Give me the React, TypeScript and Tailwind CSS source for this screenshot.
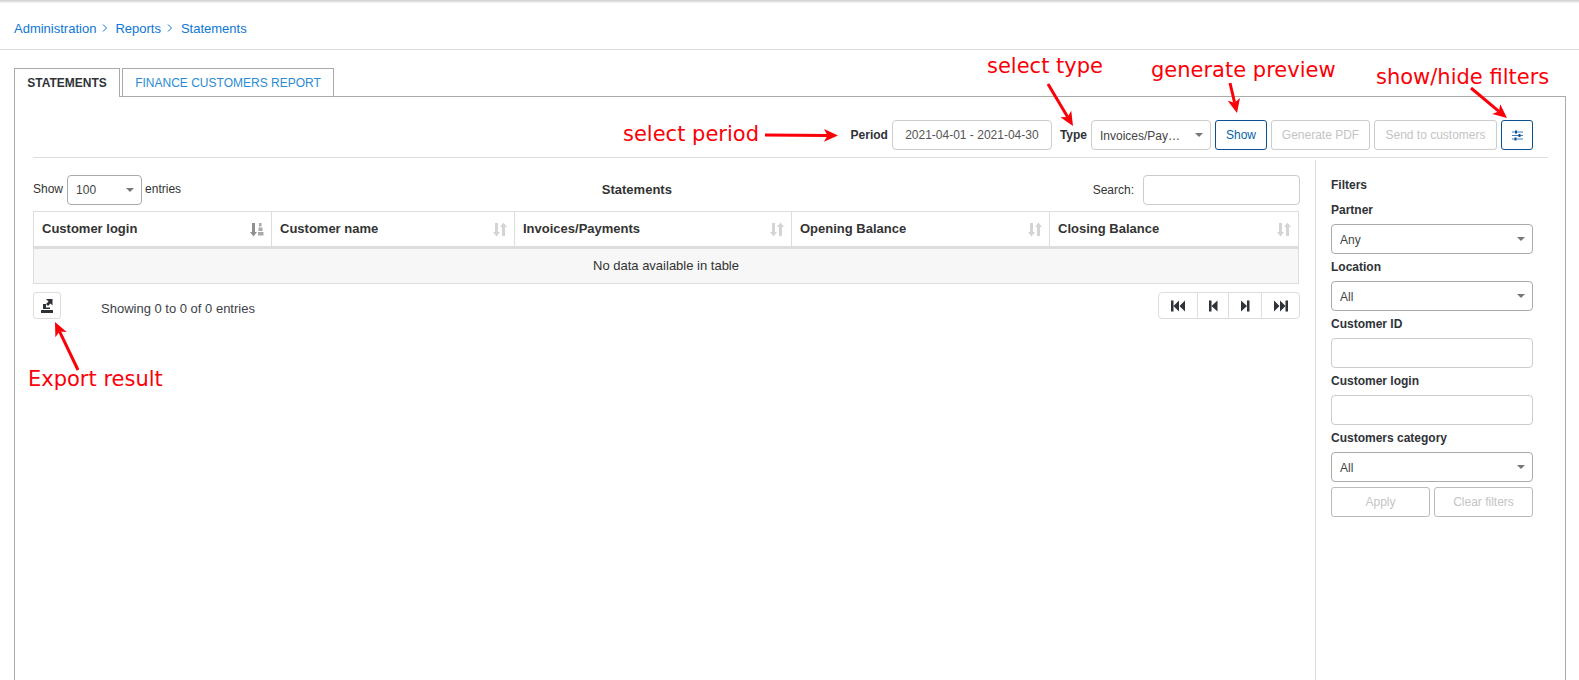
const COLUMNS = [
  { label: "Customer login", width: "w-[238px]", sorted: true },
  { label: "Customer name", width: "w-[243px]", sorted: false },
  { label: "Invoices/Payments", width: "w-[277px]", sorted: false },
  { label: "Opening Balance", width: "w-[258px]", sorted: false },
  { label: "Closing Balance", width: "", sorted: false },
];

const inputClass = "h-[30px] rounded-[4px] border border-[#ccc] bg-white";
const labelClass = "text-[12px] font-bold text-[#2f3338]";

function Caret({ className = "" }: { className?: string }) {
  return (
    <span
      className={`h-0 w-0 border-x-[4px] border-t-[4px] border-x-transparent border-t-[#777] ${className}`}
    />
  );
}

function SelectBox({
  value,
  className = "",
  dark = true,
}: {
  value: string;
  className?: string;
  dark?: boolean;
}) {
  return (
    <div
      className={`flex h-[30px] items-center justify-between rounded-[4px] border bg-white pl-[8px] pr-[7px] text-[12px] text-[#444] ${
        dark ? "border-[#aaa]" : "border-[#ccc]"
      } ${className}`}
    >
      <span className="pt-[1px]">{value}</span>
      <Caret />
    </div>
  );
}

function SortIcon({ sorted }: { sorted: boolean }) {
  if (sorted) {
    return (
      <svg width="14" height="15" viewBox="0 0 14 15" className="shrink-0">
        <path d="M2 1h3v9h2l-3.500 4.500L0 10h2z" fill="#8f8f8f" />
        <path d="M9 1h2.500v3.500H9zM8.500 5.500h4v3.500h-4zM8 10h5.500v3.500H8z" fill="#a9a9a9" />
      </svg>
    );
  }
  return (
    <svg width="14" height="15" viewBox="0 0 14 15" className="shrink-0">
      <path d="M2 1h3v9h2l-3.500 4.500L0 10h2z" fill="#d4d4d4" />
      <path d="M9 14h3V5h2L10.500.5 7 5h2z" fill="#d4d4d4" />
    </svg>
  );
}

function PageIcon({ kind }: { kind: "first" | "prev" | "next" | "last" }) {
  const paths = {
    first: "M0 .5h2.500v11H0zM8 .5v11L2.500 6zM14 .5v11L8.500 6z",
    prev: "M3 .5h2.500v11H3zM11.500 .5v11L5.500 6z",
    next: "M3 .5v11L9 6zM9 .5h2.500v11H9z",
    last: "M0 .5v11L5.500 6zM6 .5v11L11.500 6zM11.500 .5H14v11h-2.500z",
  };
  return (
    <svg width="14" height="12" viewBox="0 0 14 12">
      <path d={paths[kind]} fill="#2f3338" />
    </svg>
  );
}

function Arrow({
  from,
  to,
  size = 14,
}: {
  from: [number, number];
  to: [number, number];
  size?: number;
}) {
  const dx = to[0] - from[0];
  const dy = to[1] - from[1];
  const len = Math.hypot(dx, dy);
  const ux = dx / len;
  const uy = dy / len;
  const bx = to[0] - ux * size;
  const by = to[1] - uy * size;
  const nx = -uy * (size * 0.45);
  const ny = ux * (size * 0.45);
  const notchX = to[0] - ux * size * 0.75;
  const notchY = to[1] - uy * size * 0.75;
  return (
    <g>
      <line x1={from[0]} y1={from[1]} x2={notchX} y2={notchY} stroke="#fb0007" strokeWidth="3" />
      <polygon
        points={`${to[0]},${to[1]} ${bx + nx},${by + ny} ${notchX},${notchY} ${bx - nx},${by - ny}`}
        fill="#fb0007"
      />
    </g>
  );
}

function Note({ text, className }: { text: string; className: string }) {
  return (
    <span
      className={`absolute whitespace-nowrap font-['DejaVu_Sans',sans-serif] text-[21px] leading-[26px] text-[#fb0007] ${className}`}
    >
      {text}
    </span>
  );
}

function Annotations() {
  return (
    <>
      <svg className="pointer-events-none absolute inset-0" width="1579" height="680">
        <Arrow from={[765, 135]} to={[838, 135.500]} />
        <Arrow from={[1048, 84]} to={[1073, 126]} />
        <Arrow from={[1230, 83]} to={[1237, 113]} />
        <Arrow from={[1471, 88]} to={[1507, 118]} />
        <Arrow from={[78, 370]} to={[55, 322]} />
      </svg>
      <Note text="select period" className="left-[623px] top-[121px]" />
      <Note text="select type" className="left-[987px] top-[53px]" />
      <Note text="generate preview" className="left-[1151px] top-[57px]" />
      <Note text="show/hide filters" className="left-[1376px] top-[64px]" />
      <Note text="Export result" className="left-[28px] top-[366px]" />
    </>
  );
}

function FilterField({
  label,
  children,
  className = "",
}: {
  label: string;
  children: React.ReactNode;
  className?: string;
}) {
  return (
    <div className={`flex flex-col ${className}`}>
      <div className={`${labelClass} mb-[7px] leading-[14px]`}>{label}</div>
      {children}
    </div>
  );
}

function FiltersPanel() {
  return (
    <aside className="mt-[2px] flex w-[233px] shrink-0 flex-col border-l border-[#ddd] pl-[15px] pr-[15px]">
      <div className={`${labelClass} mt-[18px] mb-[11px] leading-[14px]`}>Filters</div>
      <FilterField label="Partner" className="mb-[6px]">
        <SelectBox value="Any" />
      </FilterField>
      <FilterField label="Location" className="mb-[6px]">
        <SelectBox value="All" />
      </FilterField>
      <FilterField label="Customer ID" className="mb-[6px]">
        <div className={inputClass} />
      </FilterField>
      <FilterField label="Customer login" className="mb-[6px]">
        <div className={inputClass} />
      </FilterField>
      <FilterField label="Customers category">
        <SelectBox value="All" />
      </FilterField>
      <div className="mt-[5px] flex gap-[4px]">
        <button className="h-[30px] flex-1 rounded-[3px] border border-[#bbb] text-[12px] text-[#c4c4c4]">
          Apply
        </button>
        <button className="h-[30px] flex-1 rounded-[3px] border border-[#bbb] text-[12px] text-[#c4c4c4]">
          Clear filters
        </button>
      </div>
    </aside>
  );
}

function StatementsTable() {
  return (
    <table className="mt-[7px] w-[calc(100%-1px)] table-fixed border-collapse text-[13px] text-[#333]">
      <thead>
        <tr className="h-[36px]">
          {COLUMNS.map((col) => (
            <th
              key={col.label}
              className={`${col.width} border border-b-[3px] border-[#ddd] border-b-[#ddd] pl-[8px] pr-[7px] text-left font-bold`}
            >
              <div className="flex items-center justify-between">
                <span>{col.label}</span>
                <SortIcon sorted={col.sorted} />
              </div>
            </th>
          ))}
        </tr>
      </thead>
      <tbody>
        <tr className="h-[36px] bg-[#f7f7f7]">
          <td colSpan={5} className="border border-[#ddd] text-center">
            No data available in table
          </td>
        </tr>
      </tbody>
    </table>
  );
}

function TableFooter() {
  return (
    <div className="mt-[8px] flex items-start justify-between">
      <div className="flex items-start">
        <button className="flex h-[27px] w-[28px] items-center justify-center rounded-[3px] border border-[#ddd]">
          <svg width="14" height="16" viewBox="0 0 14 16">
            <path d="M1 12h12v3H1z" fill="#2f3338" />
            <path d="M3 6h3v3.500h4V11H3z" fill="#2f3338" />
            <path d="M6 1h6.500v6.500l-2-2L8 8 6 6l2.500-2.500z" fill="#2f3338" />
          </svg>
        </button>
        <span className="ml-[40px] pt-[7px] text-[13px] text-[#3d4147]">
          Showing 0 to 0 of 0 entries
        </span>
      </div>
      <div className="flex h-[27px] w-[142px] rounded-[4px] border border-[#ddd]">
        {(["first", "prev", "next", "last"] as const).map((kind, i) => (
          <div
            key={kind}
            className={`flex items-center justify-center ${
              i === 0
                ? "w-[38px]"
                : i === 1
                  ? "w-[31px] border-l border-[#ddd]"
                  : i === 2
                    ? "w-[33px] border-l border-[#ddd]"
                    : "flex-1 border-l border-[#ddd]"
            }`}
          >
            <PageIcon kind={kind} />
          </div>
        ))}
      </div>
    </div>
  );
}

function Toolbar() {
  return (
    <div className="flex items-center justify-end border-b border-[#ddd] pb-[7px] pr-[15px] pt-[23px] text-[12px]">
      <span className={`${labelClass} mr-[4px]`}>Period</span>
      <div className="flex h-[30px] w-[160px] items-center justify-center rounded-[4px] border border-[#ccc] text-[#555]">
        2021-04-01 - 2021-04-30
      </div>
      <span className={`${labelClass} ml-[8px] mr-[4px]`}>Type</span>
      <SelectBox value="Invoices/Pay…" className="w-[120px]" dark={false} />
      <button className="ml-[4px] h-[30px] w-[52px] rounded-[3px] border border-[#0a4f8f] text-[#0a5fa8]">
        Show
      </button>
      <button className="ml-[4px] h-[30px] w-[99px] rounded-[3px] border border-[#ccc] text-[#c4c4c4]">
        Generate PDF
      </button>
      <button className="ml-[4px] h-[30px] w-[123px] rounded-[3px] border border-[#ccc] text-[#c4c4c4]">
        Send to customers
      </button>
      <button className="ml-[4px] flex h-[30px] w-[32px] items-center justify-center rounded-[3px] border border-[#0a4f8f]">
        <svg width="11" height="11" viewBox="0 0 11 11">
          <path d="M0 1.500h11v1H0zM0 5h11v1H0zM0 8.500h11v1H0z" fill="#3f80bd" />
          <path d="M3 .5h2v3H3zM6.500 4h2v3h-2zM2.500 7.500h2v3h-2z" fill="#0a4f8f" />
        </svg>
      </button>
    </div>
  );
}

function Chevron() {
  return (
    <span className="mb-[2px]">
      <svg width="8" height="8" viewBox="0 0 8 8" fill="none" stroke="#0b76d6" strokeWidth="1">
        <path d="M2 .5 5.500 4 2 7.500" />
      </svg>
    </span>
  );
}

export default function App() {
  return (
    <div className="relative flex h-[680px] w-full flex-col overflow-hidden bg-white font-['Liberation_Sans',Arial,sans-serif]">
      <div className="h-[3px] bg-gradient-to-b from-[#cfcfcf] to-[#f6f6f6]" />
      <nav className="flex h-[47px] items-center gap-[5px] border-b border-[#ddd] px-[14px] pt-[6px] text-[13px] text-[#0b76d6]">
        <span>Administration</span>
        <Chevron />
        <span className="ml-[1px]">Reports</span>
        <Chevron />
        <span className="ml-[2px]">Statements</span>
      </nav>

      <main className="flex min-h-0 flex-1 flex-col pl-[14px] pr-[13px] pt-[18px]">
        <div className="relative z-10 -mb-px flex h-[29px] gap-[2px]">
          <div className="flex w-[106px] items-center justify-center border border-b-0 border-[#aaa] bg-white text-[12px] font-bold text-[#2f3338]">
            STATEMENTS
          </div>
          <div className="flex w-[212px] items-center justify-center border border-[#aaa] bg-white text-[12px] text-[#2a8bd4]">
            FINANCE CUSTOMERS REPORT
          </div>
        </div>
        <section className="flex min-h-0 flex-1 flex-col border border-b-0 border-[#aaa] pl-[18px] pr-[17px]">
          <Toolbar />
          <div className="flex min-h-0 flex-1">
            <div className="min-w-0 flex-1 pr-[15px] pt-[17px]">
              <div className="flex h-[29px] items-center justify-between text-[12px] text-[#333]">
                <div className="flex items-center">
                  <span className="mb-[2px]">Show</span>
                  <SelectBox value="100" className="ml-[4px] mr-[3px] w-[75px]" />
                  <span className="mb-[2px]">entries</span>
                </div>
                <span className="text-[13px] font-bold">Statements</span>
                <div className="flex items-center">
                  <span>Search:</span>
                  <div className={`${inputClass} ml-[9px] h-[29px] w-[157px]`} />
                </div>
              </div>
              <StatementsTable />
              <TableFooter />
            </div>
            <FiltersPanel />
          </div>
        </section>
      </main>

      <Annotations />
    </div>
  );
}
